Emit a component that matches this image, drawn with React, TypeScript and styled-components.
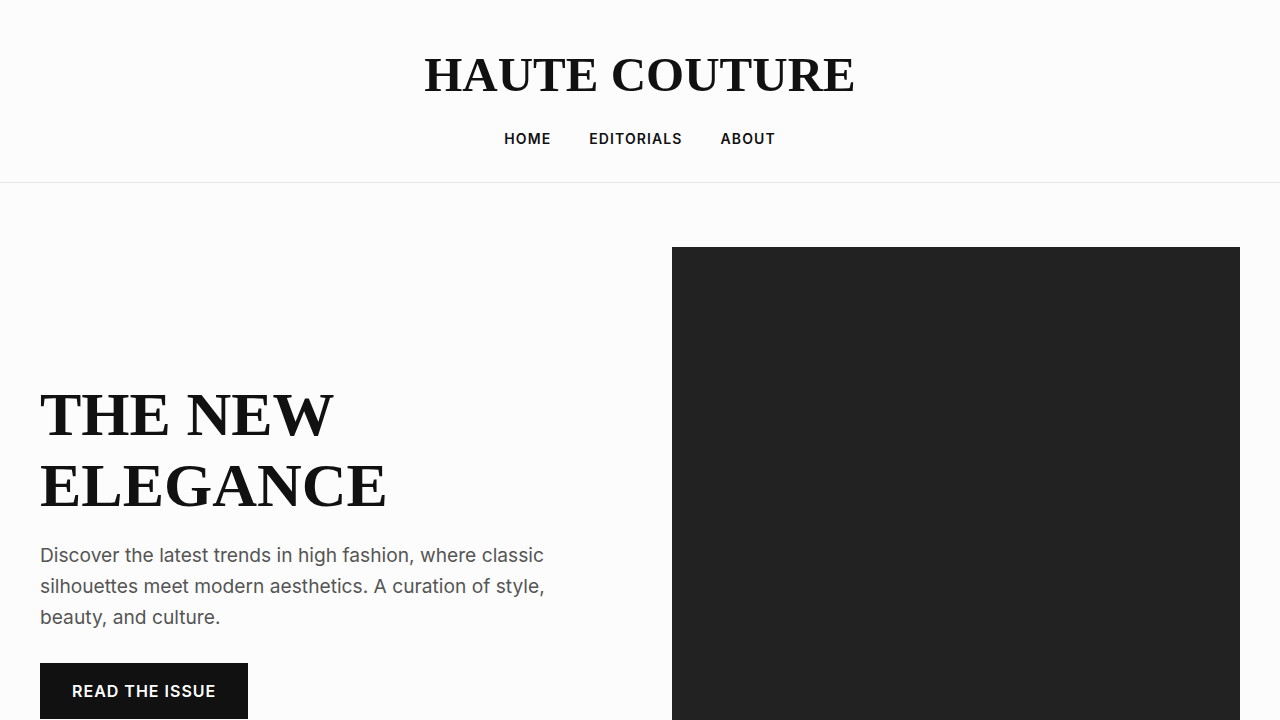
import React from "react";
import styled, { createGlobalStyle } from "styled-components";

const GlobalStyle = createGlobalStyle`
  * { box-sizing: border-box; }
  html, body { margin: 0; padding: 0; }
  body {
    background: #fcfcfc;
    color: #111;
    font-family: Inter, "Liberation Sans", sans-serif;
    overflow: hidden;
  }
`;

export default function App() {
  return (
    <>
      <GlobalStyle />
      <Header>
        <Logo>HAUTE COUTURE</Logo>
        <Nav>
          <NavLink href="#">HOME</NavLink>
          <NavLink href="#">EDITORIALS</NavLink>
          <NavLink href="#">ABOUT</NavLink>
        </Nav>
      </Header>
      <Hero>
        <Copy>
          <Title>
            THE NEW
            <br />
            ELEGANCE
          </Title>
          <Lead>
            Discover the latest trends in high fashion, where classic silhouettes
            meet modern aesthetics. A curation of style, beauty, and culture.
          </Lead>
          <CtaButton>READ THE ISSUE</CtaButton>
        </Copy>
        <Visual />
      </Hero>
    </>
  );
}

const Header = styled.header`
  display: flex;
  flex-direction: column;
  align-items: center;
  padding: 50px 0 35px;
  border-bottom: 1px solid #e5e5e5;
`;

const Logo = styled.h1`
  margin: 0 0 31px;
  font-family: "Liberation Serif", "Times New Roman", serif;
  font-weight: 700;
  font-size: 49px;
  line-height: 1;
  color: #111;
`;

const Nav = styled.nav`
  display: flex;
  gap: 38px;
`;

const NavLink = styled.a`
  font-size: 14px;
  font-weight: 600;
  letter-spacing: 1.1px;
  color: #111;
  text-decoration: none;
`;

const Hero = styled.main`
  display: grid;
  grid-template-columns: 1fr 1fr;
  gap: 64px;
  align-items: center;
  padding: 64px 40px;
`;

const Copy = styled.div`
  display: flex;
  flex-direction: column;
  align-items: flex-start;
`;

const Title = styled.h2`
  margin: 0 0 19px;
  font-family: "Liberation Serif", "Times New Roman", serif;
  font-weight: 700;
  font-size: 62px;
  line-height: 71px;
  color: #111;
`;

const Lead = styled.p`
  margin: 0 0 30px;
  max-width: 540px;
  font-size: 19.2px;
  line-height: 1.6;
  color: #555;
`;

const CtaButton = styled.button`
  border: none;
  background: #111;
  color: #fff;
  font-family: Inter, "Liberation Sans", sans-serif;
  font-size: 16px;
  font-weight: 600;
  line-height: 20px;
  letter-spacing: 1px;
  padding: 18px 32px;
  cursor: pointer;
`;

const Visual = styled.div`
  height: 604px;
  background: #222;
`;
